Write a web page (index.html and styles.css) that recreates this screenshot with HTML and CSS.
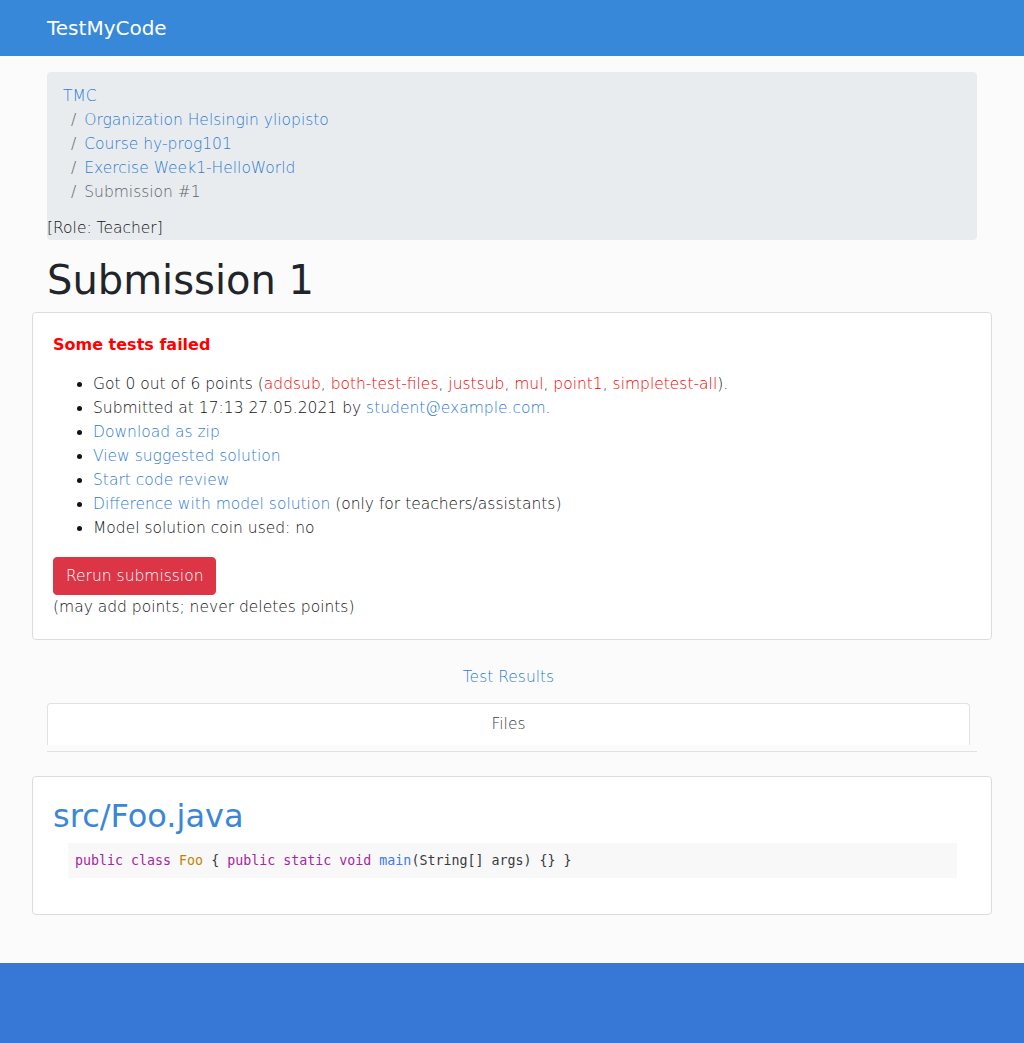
FILE: index.html
```html
<!DOCTYPE html>
<html lang="en">
<head>
<meta charset="utf-8">
<title>Submission 1</title>
<link rel="stylesheet" href="styles.css">
</head>
<body>
<header class="navbar">
  <a class="brand" href="#">TestMyCode</a>
</header>
<main class="page">
  <nav class="crumbs">
    <ol class="crumb-list">
      <li class="crumb"><a href="#">TMC</a></li>
      <li class="crumb sep"><a href="#">Organization Helsingin yliopisto</a></li>
      <li class="crumb sep"><a href="#">Course hy-prog101</a></li>
      <li class="crumb sep"><a href="#">Exercise Week1-HelloWorld</a></li>
      <li class="crumb sep active">Submission #1</li>
    </ol>
    <div class="role">[Role: Teacher]</div>
  </nav>
  <h1 class="title">Submission 1</h1>
  <section class="card">
    <p class="status">Some tests failed</p>
    <ul class="facts">
      <li>Got 0 out of 6 points (<span class="fail">addsub</span>, <span class="fail">both-test-files</span>, <span class="fail">justsub</span>, <span class="fail">mul</span>, <span class="fail">point1</span>, <span class="fail">simpletest-all</span>).</li>
      <li>Submitted at 17:13 27.05.2021 by <a href="#">student@example.com</a>.</li>
      <li><a href="#">Download as zip</a></li>
      <li><a href="#">View suggested solution</a></li>
      <li><a href="#">Start code review</a></li>
      <li><a href="#">Difference with model solution</a> (only for teachers/assistants)</li>
      <li>Model solution coin used: no</li>
    </ul>
    <button class="btn-danger" type="button">Rerun submission</button>
    <div class="note">(may add points; never deletes points)</div>
  </section>
  <div class="tabs-head"><a href="#">Test Results</a></div>
  <div class="tabs">
    <div class="tab">Files</div>
  </div>
  <section class="card file-card">
    <h2 class="file-name">src/Foo.java</h2>
    <pre class="code"><span class="kw">public</span> <span class="kw">class</span> <span class="cls">Foo</span> { <span class="kw">public</span> <span class="kw">static</span> <span class="kw">void</span> <span class="fn">main</span>(String[] args) {} }</pre>
  </section>
</main>
<footer class="footer"></footer>
</body>
</html>
```

FILE: styles.css
```css
html, body {
  margin: 0;
  padding: 0;
}
body {
  background: #fbfbfb;
  color: #111315;
  font-family: "DejaVu Sans", sans-serif;
  font-size: 15.5px;
  line-height: 24px;
  font-weight: 300;
}
a {
  color: #2f7dd0;
  text-decoration: none;
}
.navbar {
  height: 56px;
  background: #3788d8;
  display: flex;
  align-items: center;
  padding: 0 47px;
}
.brand {
  color: #fff;
  font-size: 20px;
  font-weight: 400;
}
.page {
  padding: 16px 32px 0;
}
.crumbs {
  margin: 0 15px;
  background: #e9ecef;
  border-radius: 4px;
}
.crumb-list {
  list-style: none;
  margin: 0;
  padding: 12px 16px;
}
.crumb.sep::before {
  content: "/";
  color: #5c636a;
  padding: 0 8px;
}
.crumb.active {
  color: #5c636a;
}
.title {
  margin: 16px 15px 8px;
  font-size: 40px;
  line-height: 48px;
  font-weight: 400;
  color: #212529;
}
.card {
  background: #fff;
  border: 1px solid #dcdcdc;
  border-radius: 4px;
  padding: 20px;
}
.status {
  margin: 0 0 15px;
  color: #ff0000;
  font-weight: 700;
  font-size: 16px;
}
.facts {
  margin: 0 0 17px;
  padding-left: 40px;
}
.fail {
  color: #f00000;
}
.btn-danger {
  display: block;
  background: #dc3545;
  color: #fff;
  border: 1px solid #dc3545;
  border-radius: 4px;
  padding: 6px 12px;
  font: inherit;
  line-height: 24px;
}
.tabs-head {
  text-align: center;
  margin: 25px 22px 0 15px;
}
.tabs {
  margin: 14px 15px 24px;
  border-bottom: 1px solid #dee2e6;
  padding-bottom: 6px;
}
.tab {
  margin-right: 7px;
  border: 1px solid #dee2e6;
  border-bottom: 0;
  border-radius: 4px 4px 0 0;
  background: #fff;
  text-align: center;
  color: #3a3f44;
  padding: 8px 0 9px;
}
.file-card {
  margin-bottom: 48px;
}
.file-name {
  margin: 0 0 8px;
  color: #3a87d8;
  font-size: 32px;
  line-height: 38px;
  font-weight: 400;
}
.code {
  margin: 0 14px 16px 15px;
  background: #f8f8f8;
  padding: 8px 7px;
  font-family: "DejaVu Sans Mono", monospace;
  font-size: 13.3px;
  line-height: 19px;
  color: #383a42;
}
.kw { color: #a626a4; }
.cls { color: #c18401; }
.fn { color: #4078f2; }
.footer {
  height: 80px;
  background: #3777d6;
}
```
